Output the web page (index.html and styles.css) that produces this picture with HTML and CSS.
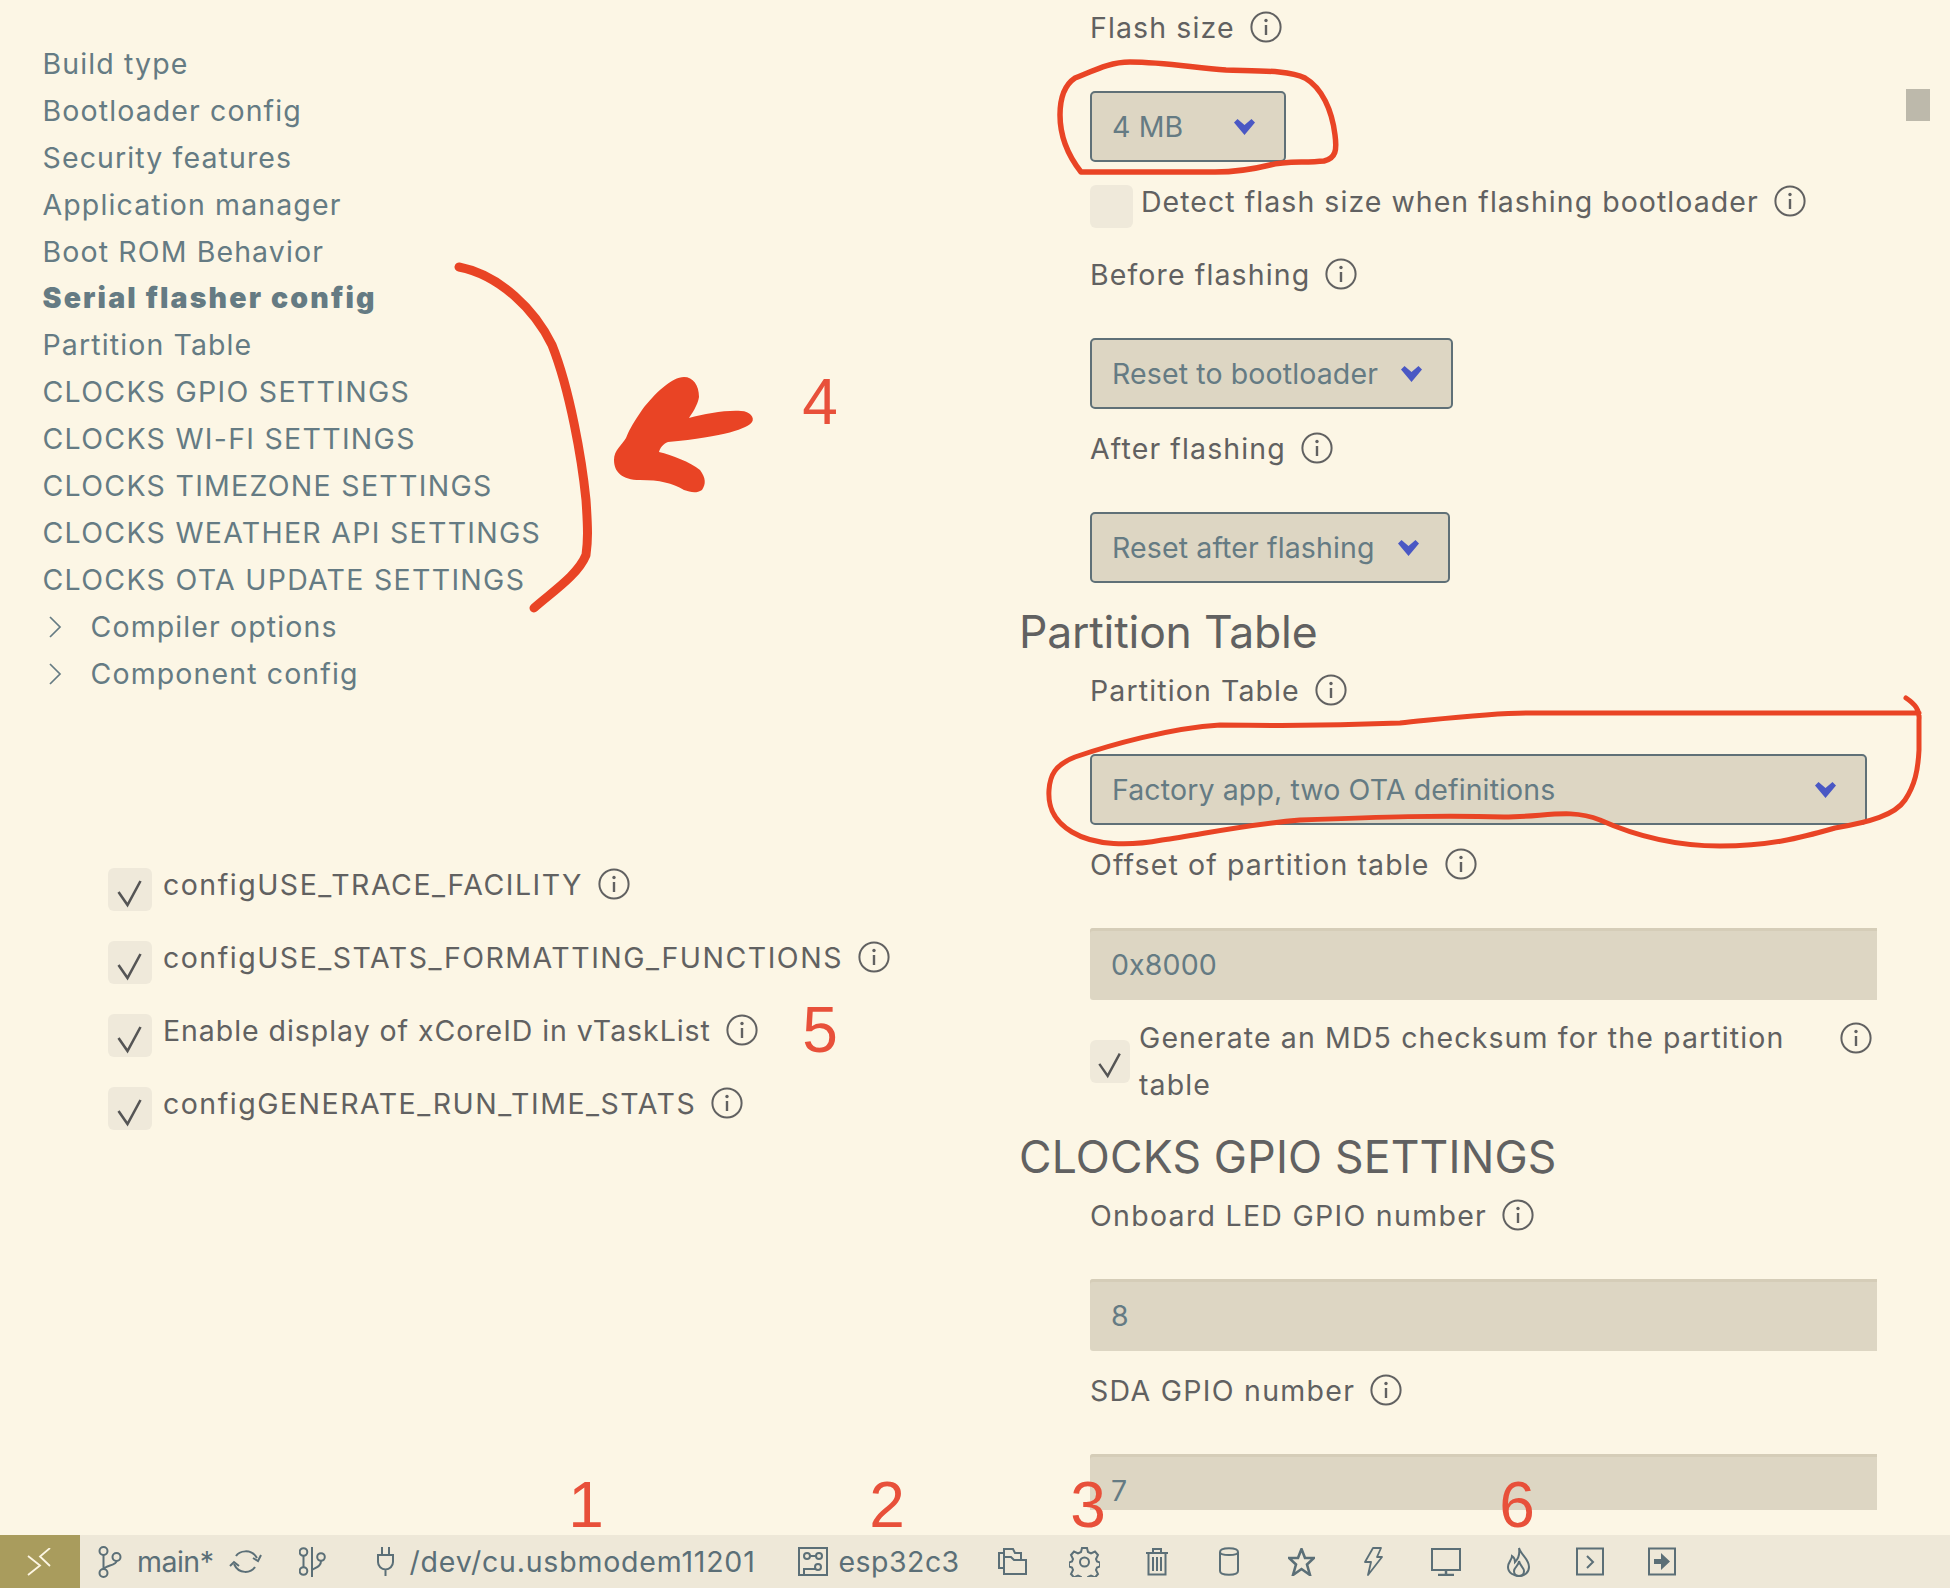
FILE: index.html
```html
<!DOCTYPE html>
<html lang="en">
<head>
<meta charset="utf-8">
<title>ESP-IDF SDK Configuration</title>
<link rel="stylesheet" href="styles.css">
</head>
<body>
<svg width="0" height="0" class="defs">
  <symbol id="info" viewBox="0 0 32 32"><circle cx="16" cy="16" r="14.6" fill="none" stroke="currentColor" stroke-width="2"/><circle cx="16" cy="9.5" r="1.7" fill="currentColor"/><path d="M16 14v10" stroke="currentColor" stroke-width="2.4" fill="none"/></symbol>
  <symbol id="tick" viewBox="0 0 43 43"><path d="M10 24l9 13L32 13" fill="none" stroke="currentColor" stroke-width="2.6"/></symbol>
  <symbol id="chev" viewBox="0 0 21 16"><path d="M0 3.500L3.500 0l7 6 7-6L21 3.500 10.500 16z" fill="currentColor"/></symbol>
  <symbol id="twist" viewBox="0 0 14 24"><path d="M2 2l10 10L2 22" fill="none" stroke="currentColor" stroke-width="1.7"/></symbol>
</svg>
<div class="page">
  <main class="panes">
    <aside class="side">
      <nav class="toc">
        <a class="toc-item">Build type</a>
        <a class="toc-item">Bootloader config</a>
        <a class="toc-item">Security features</a>
        <a class="toc-item">Application manager</a>
        <a class="toc-item">Boot ROM Behavior</a>
        <a class="toc-item toc-active">Serial flasher config</a>
        <a class="toc-item">Partition Table</a>
        <a class="toc-item caps">CLOCKS GPIO SETTINGS</a>
        <a class="toc-item caps">CLOCKS WI-FI SETTINGS</a>
        <a class="toc-item caps">CLOCKS TIMEZONE SETTINGS</a>
        <a class="toc-item caps">CLOCKS WEATHER API SETTINGS</a>
        <a class="toc-item caps">CLOCKS OTA UPDATE SETTINGS</a>
        <a class="toc-item toc-parent"><svg class="twist"><use href="#twist"/></svg>Compiler options</a>
        <a class="toc-item toc-parent"><svg class="twist"><use href="#twist"/></svg>Component config</a>
      </nav>
      <section class="checks">
        <div class="check-row"><span class="box"><svg class="tick"><use href="#tick"/></svg></span><span class="macro">configUSE_TRACE_FACILITY</span><svg class="info"><use href="#info"/></svg></div>
        <div class="check-row"><span class="box"><svg class="tick"><use href="#tick"/></svg></span><span class="macro">configUSE_STATS_FORMATTING_FUNCTIONS</span><svg class="info"><use href="#info"/></svg></div>
        <div class="check-row"><span class="box"><svg class="tick"><use href="#tick"/></svg></span><span class="prose">Enable display of xCoreID in vTaskList</span><svg class="info"><use href="#info"/></svg></div>
        <div class="check-row"><span class="box"><svg class="tick"><use href="#tick"/></svg></span><span class="macro">configGENERATE_RUN_TIME_STATS</span><svg class="info"><use href="#info"/></svg></div>
      </section>
    </aside>
    <section class="form">
      <div class="field">
        <div class="label">Flash size<svg class="info"><use href="#info"/></svg></div>
        <div class="select select-sm"><span>4 MB</span><svg class="chev"><use href="#chev"/></svg></div>
      </div>
      <div class="check-field">
        <span class="box"></span><span class="check-text">Detect flash size when flashing bootloader</span><svg class="info"><use href="#info"/></svg>
      </div>
      <div class="field">
        <div class="label">Before flashing<svg class="info"><use href="#info"/></svg></div>
        <div class="select"><span>Reset to bootloader</span><svg class="chev"><use href="#chev"/></svg></div>
      </div>
      <div class="field">
        <div class="label">After flashing<svg class="info"><use href="#info"/></svg></div>
        <div class="select"><span>Reset after flashing</span><svg class="chev"><use href="#chev"/></svg></div>
      </div>
      <h2 class="heading heading-tight">Partition Table</h2>
      <div class="field">
        <div class="label">Partition Table<svg class="info"><use href="#info"/></svg></div>
        <div class="select select-wide"><span>Factory app, two OTA definitions</span><svg class="chev"><use href="#chev"/></svg></div>
      </div>
      <div class="field">
        <div class="label">Offset of partition table<svg class="info"><use href="#info"/></svg></div>
        <div class="input">0x8000</div>
      </div>
      <div class="check-field check-wrap">
        <span class="box box-narrow"><svg class="tick"><use href="#tick"/></svg></span><span class="check-text">Generate an MD5 checksum for the partition table</span><svg class="info"><use href="#info"/></svg>
      </div>
      <h2 class="heading">CLOCKS GPIO SETTINGS</h2>
      <div class="field">
        <div class="label caps">Onboard LED GPIO number<svg class="info"><use href="#info"/></svg></div>
        <div class="input">8</div>
      </div>
      <div class="field">
        <div class="label caps">SDA GPIO number<svg class="info"><use href="#info"/></svg></div>
        <div class="input">7</div>
      </div>
    </section>
  </main>
  <footer class="status">
    <div class="remote"><svg width="26" height="28" viewBox="0 0 26 28"><path d="M1 8l12 9.500L1 27M23 0L13 8.500 23 18" fill="none" stroke="#fdf6e3" stroke-width="1.8"/></svg></div>
    <svg class="ic ic-branch" width="24" height="32" viewBox="0 0 24 32"><g fill="none" stroke="currentColor" stroke-width="2"><circle cx="5.5" cy="5" r="4"/><circle cx="5.5" cy="27" r="4"/><circle cx="18.5" cy="11" r="4"/><path d="M5.5 9v14M18.5 15c0 5-13 4-13 9"/></g></svg>
    <span class="st-text st-main">main*</span>
    <svg class="ic ic-sync" width="33" height="25" viewBox="0 0 33 25"><g fill="none" stroke="currentColor" stroke-width="2"><path d="M7 7C10 2 22 -1 28 9M26 18c-4 6-16 8-21-3"/><path d="M24 9l5 3 3-6M1 17l4-4 5 4"/></g></svg>
    <svg class="ic ic-compare" width="28" height="30" viewBox="0 0 28 30"><g fill="none" stroke="currentColor" stroke-width="2"><circle cx="4.5" cy="5" r="3.8"/><circle cx="4.5" cy="24" r="3.8"/><circle cx="22" cy="10" r="3.8"/><path d="M4.5 9v11M13 0v30M22 14c0 5-4 6-9 9"/></g></svg>
    <svg class="ic ic-plug" width="19" height="29" viewBox="0 0 19 29"><g fill="none" stroke="currentColor" stroke-width="2"><path d="M6 0v8M13 0v8M2 8h15v7a7.5 7.5 0 0 1-15 0zM9.500 22.500V29"/></g></svg>
    <span class="st-text st-path">/dev/cu.usbmodem11201</span>
    <svg class="ic ic-chip" width="30" height="29" viewBox="0 0 30 29"><g fill="none" stroke="currentColor" stroke-width="2"><rect x="1" y="1" width="28" height="27"/><circle cx="9" cy="9" r="3"/><circle cx="21" cy="9" r="3"/><circle cx="20" cy="20" r="3"/><path d="M12 9h6M6 28v-6h11"/></g></svg>
    <span class="st-text st-board">esp32c3</span>
    <div class="tools">
      <span class="tool"><svg width="29" height="27" viewBox="0 0 29 27"><g fill="none" stroke="currentColor" stroke-width="2"><path d="M6 5V1h9l2 4h6v7M6 5H1v15h5M6 5v21h22V12H16l-3-3H6"/></g></svg></span>
      <span class="tool"><svg width="31" height="30" viewBox="0 0 31 30"><g fill="none" stroke="currentColor" stroke-width="2"><circle cx="15.500" cy="15" r="4.500"/><path d="M13 1h5l1 4 3 1.500 4-2 3 3.500-2 4 1 2.500 3 1v4l-3 1-1 2.500 2 4-3 3.500-4-2-3 1.500-1 3h-5l-1-3-3-1.500-4 2-3-3.500 2-4-1-2.500-3-1v-4l3-1 1-2.500-2-4 3-3.500 4 2 3-1.500z"/></g></svg></span>
      <span class="tool"><svg width="24" height="28" viewBox="0 0 24 28"><g fill="none" stroke="currentColor" stroke-width="2"><path d="M1 5h22M8 5V1h8v4M3.500 6v20.500h17V6M8 9v14M12 9v14M16 9v14"/></g></svg></span>
      <span class="tool"><svg width="20" height="29" viewBox="0 0 20 29"><g fill="none" stroke="currentColor" stroke-width="2"><path d="M1 5c0-5 18-5 18 0v19c0 5-18 5-18 0zM1 5c0 4 18 4 18 0"/></g></svg></span>
      <span class="tool"><svg width="27" height="28" viewBox="0 0 27 28"><path d="M13.500 1l3.500 9h9l-7 6.500L22 27l-8.500-6L5 27l3-10.500L1 10h9z" fill="none" stroke="currentColor" stroke-width="2.600"/></svg></span>
      <span class="tool"><svg width="19" height="29" viewBox="0 0 19 29"><path d="M9 1h8l-4 9h5L4 28l3-13H1z" fill="none" stroke="currentColor" stroke-width="1.800" stroke-linejoin="round"/></svg></span>
      <span class="tool"><svg width="30" height="28" viewBox="0 0 30 28"><g fill="none" stroke="currentColor" stroke-width="2"><rect x="1" y="1" width="28" height="21"/><path d="M15 22v4M7 27h16" stroke-width="2.500"/></g></svg></span>
      <span class="tool"><svg width="23" height="30" viewBox="0 0 23 30"><g fill="none" stroke="currentColor" stroke-width="2"><path d="M12 1c2 7 10 11 10 19 0 6-5 9-10 9S1 26 1 20c0-5 4-7 4-11 3 2 3 4 3 6 3-3 5-8 4-14z"/><path d="M12 14c1 5 5 7 5 10 0 3-2 5-5 5s-5-2-5-5c0-4 5-5 5-10z"/></g></svg></span>
      <span class="tool"><svg width="28" height="29" viewBox="0 0 28 29"><g fill="none" stroke="currentColor" stroke-width="2"><rect x="1" y="1.500" width="26" height="26"/><path d="M11 9l6 6-6 6"/></g></svg></span>
      <span class="tool"><svg width="28" height="29" viewBox="0 0 28 29"><g fill="none" stroke="currentColor" stroke-width="2"><rect x="1" y="1.500" width="26" height="26"/></g><path d="M6 12h7V6l9 8.500-9 8.500v-6H6z" fill="currentColor"/></svg></span>
    </div>
  </footer>
  <div class="thumb"></div>
  <div class="marks">
    <svg class="ink" width="1950" height="1588" viewBox="0 0 1950 1588">
      <g fill="none" stroke="#e94425" stroke-linecap="round" stroke-linejoin="round">
        <path stroke-width="5.500" d="M1081 172C1070 158 1060 140 1060 115C1060 95 1066 84 1075 78C1095 70 1110 62 1130 62C1165 62 1195 68 1226 70C1260 71 1289 70 1305 78C1322 88 1332 110 1335 135C1337 150 1336 158 1324 161C1305 163 1285 161 1270 165C1250 170 1235 172 1215 172Z"/>
        <path stroke-width="5" d="M1906 698C1915 704 1920 710 1919 720L1919 750C1918 770 1915 785 1905 800C1895 815 1870 822 1835 828C1800 838 1770 846 1720 846C1680 846 1640 838 1600 820C1570 808 1545 817 1504 817C1440 815 1380 817 1300 820C1240 825 1200 835 1162 840C1130 846 1095 846 1072 832C1052 820 1048 805 1049 790C1050 775 1055 765 1075 757C1110 745 1170 728 1220 725C1260 725 1300 727 1400 723C1450 718 1490 713 1527 713L1919 713"/>
        <path stroke-width="9" d="M459 267C500 275 535 310 552 345C570 390 582 460 586 500C588 530 588 540 586 555C578 575 552 592 534 608"/>
      </g>
      <path fill="#e94425" d="M684 377C693 377 699 385 699 397C698 405 691 415 689 418C705 414 725 410 741 411C750 411 755 418 752 422C748 428 725 437 668 442C663 444 660 448 659 452C672 455 690 462 700 470C706 478 706 484 702 490C696 494 690 492 684 490C672 483 660 480 640 480C622 480 614 472 614 460C614 450 622 445 626 438C630 428 634 422 642 410C655 393 672 377 684 377Z"/>
    </svg>
    <span class="num n1">1</span>
    <span class="num n2">2</span>
    <span class="num n3">3</span>
    <span class="num n4">4</span>
    <span class="num n5">5</span>
    <span class="num n6">6</span>
  </div>
</div>
</body>
</html>
```
FILE: styles.css
```css
* { box-sizing: border-box; }
html, body { margin: 0; padding: 0; }
body {
  background: #fcf6e5;
  font-family: "Inter", "Liberation Sans", sans-serif;
  font-size: 28.5px;
  letter-spacing: 1.12px;
  color: #616161;
}
.defs { position: absolute; }
.page { position: relative; width: 1950px; height: 1588px; overflow: hidden; }
.panes {
  display: grid;
  grid-template-columns: 1019px 1fr;
  height: 1510px;
  margin-bottom: 25px;
  overflow: hidden;
}

.side { padding: 41px 0 0 42.5px; }
.toc { display: flex; flex-direction: column; color: #657b83; }
.toc-item { line-height: 46.9px; height: 46.9px; white-space: nowrap; display: flex; align-items: center; }
.toc-active { font-weight: 900; letter-spacing: 2.15px; }
.caps { letter-spacing: 1.29px; }
.twist { width: 14px; height: 24px; margin: 0 29px 0 5px; color: #657b83; flex: none; }

.checks { display: flex; flex-direction: column; gap: 23px; margin: 163.6px 0 0 65.5px; }
.check-row { display: flex; align-items: flex-start; line-height: 47px; white-space: nowrap; }
.macro { letter-spacing: 1.5px; }
.prose { letter-spacing: 0.95px; }
.box {
  flex: none; width: 44px; height: 43px; margin-top: 7px; margin-right: 11px;
  background: #efe9da; border-radius: 6px; display: block;
}
.tick { display: block; width: 100%; height: 100%; color: #555; }
.info { width: 32px; height: 32px; flex: none; margin-left: 15px; margin-top: 7px; color: #616161; }

.form { width: 858px; padding: 4px 0 0 71px; }
.field { margin-bottom: 16px; }
.label { display: flex; align-items: flex-start; line-height: 47px; height: 47px; }
.select {
  display: inline-flex; align-items: center; gap: 23px;
  height: 71px; margin-top: 40px; padding: 0 29px 0 20px;
  background: #ddd6c3; border: 2px solid #5f7077; border-radius: 5px; color: #657b83;
  vertical-align: top; letter-spacing: 0.12px;
}
.select-sm { width: 196px; justify-content: space-between; }
.select-wide { width: 776.500px; display: flex; justify-content: space-between; }
.chev { width: 21px; height: 16px; color: #4a58c4; flex: none; }
.input {
  width: 787px; height: 71.5px; margin-top: 40px; padding-left: 21px;
  background: #ddd6c3; border-radius: 3px 0 0 3px; color: #657b83;
  line-height: 73px; box-shadow: inset 0 3px 0 #d5cdb8; letter-spacing: 0.12px;
}
.check-field { display: flex; align-items: flex-start; line-height: 47px; margin-bottom: 23px; width: 786px; }
.check-field .box { width: 43px; margin-right: 8px; }
.check-field .check-text { letter-spacing: 1.04px; }
.check-wrap { align-items: center; margin-bottom: 16.5px; }
.check-wrap .box { width: 40px; margin: 0 9px 0 0; }
.check-wrap .check-text { width: 660px; letter-spacing: 1.12px; margin-top: -2px; margin-bottom: 0; }
.check-wrap .info { margin: 0 4px 47px auto; }
.heading {
  margin: 0 0 0 -71px; font-weight: 400; font-size: 44.5px; height: 68px; line-height: 66px; color: #616161; letter-spacing: 0.2px;
}
.heading-tight { letter-spacing: -0.2px; }

.status {
  display: flex; align-items: center; height: 53px; background: #eee8d8; color: #5b6f77; font-size: 28.5px;
  font-family: "Inter", sans-serif; letter-spacing: 0.45px;
}
.remote { width: 80px; height: 53px; background: #a99c5d; display: flex; align-items: center; justify-content: center; }
.ic { flex: none; }
.ic-branch { margin-left: 18px; }
.st-main { margin-left: 15px; letter-spacing: -0.5px; }
.ic-sync { margin-left: 15px; }
.ic-compare { margin-left: 37px; }
.ic-plug { margin-left: 49px; }
.st-path { margin-left: 15px; letter-spacing: 0.8px; }
.ic-chip { margin-left: 42px; }
.st-board { margin-left: 11px; }
.tools { display: flex; align-items: center; margin-left: 17px; }
.tool { width: 72.2px; display: flex; justify-content: center; }

.thumb { position: absolute; left: 1906px; top: 89px; width: 24px; height: 32px; background: #bdb9ab; }
.marks { position: absolute; inset: 0; pointer-events: none; }
.ink { position: absolute; left: 0; top: 0; }
.num { position: absolute; font-family: "Liberation Sans", sans-serif; font-size: 64px; line-height: 64px; letter-spacing: 0; color: #e8503a; transform: translate(-50%, -50%); }
.n1 { left: 586px; top: 1505px; }
.n2 { left: 887px; top: 1505px; }
.n3 { left: 1088px; top: 1505px; }
.n4 { left: 820px; top: 402px; }
.n5 { left: 820px; top: 1030px; }
.n6 { left: 1517px; top: 1505px; }
```
